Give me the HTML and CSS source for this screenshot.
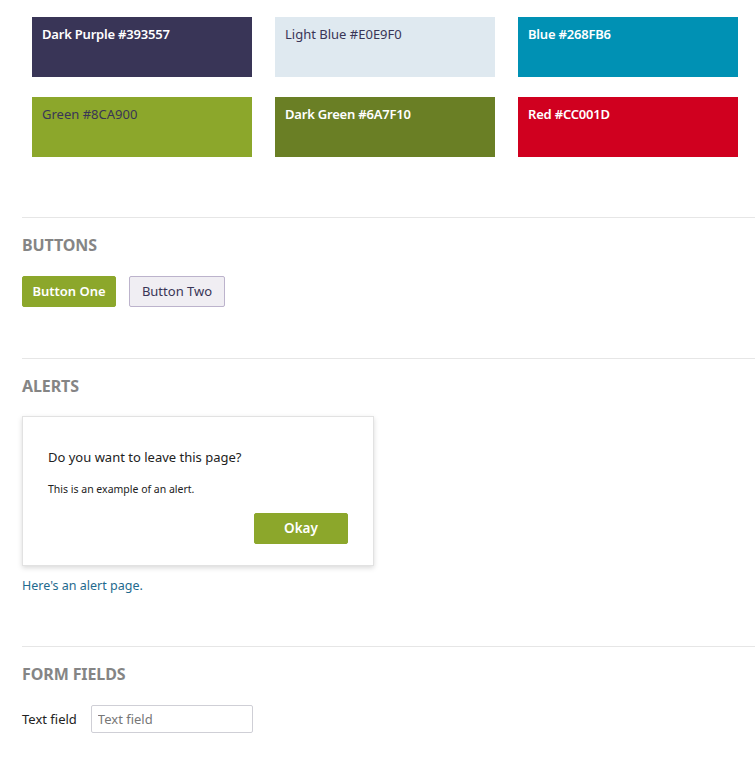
FILE: index.html
```html
<!DOCTYPE html>
<html>
<head>
<meta charset="utf-8">
<link rel="stylesheet" href="styles.css">
</head>
<body>
<div class="page">
  <div class="swatches">
    <div class="swatch purple">Dark Purple #393557</div>
    <div class="swatch lightblue">Light Blue #E0E9F0</div>
    <div class="swatch blue">Blue #268FB6</div>
    <div class="swatch green">Green #8CA900</div>
    <div class="swatch darkgreen">Dark Green #6A7F10</div>
    <div class="swatch red">Red #CC001D</div>
  </div>

  <section class="section">
    <h2 class="heading">BUTTONS</h2>
    <div class="buttons">
      <button class="btn btn-primary">Button One</button>
      <button class="btn btn-secondary">Button Two</button>
    </div>
  </section>

  <section class="section">
    <h2 class="heading">ALERTS</h2>
    <div class="alert">
      <p class="alert-title">Do you want to leave this page?</p>
      <p class="alert-text">This is an example of an alert.</p>
      <div class="alert-actions">
        <button class="btn btn-primary btn-okay">Okay</button>
      </div>
    </div>
    <a class="link" href="#">Here's an alert page.</a>
  </section>

  <section class="section last">
    <h2 class="heading">FORM FIELDS</h2>
    <div class="field">
      <label class="field-label">Text field</label>
      <input class="field-input" type="text" placeholder="Text field">
    </div>
  </section>
</div>
</body>
</html>
```

FILE: styles.css
```css
* { box-sizing: border-box; }
html, body { margin: 0; padding: 0; background: #fff; }
body {
  font-family: "Noto Sans", "Open Sans", sans-serif;
  color: #222;
}
.page {
  padding: 17px 0 0 22px;
}
.swatches {
  display: grid;
  grid-template-columns: 220px 220px 220px;
  grid-auto-rows: 60px;
  column-gap: 23px;
  row-gap: 20px;
  margin-left: 10px;
}
.swatch {
  height: 60px;
  padding: 8px 10px;
  font-size: 13px;
  line-height: 18px;
  font-weight: 600;
  letter-spacing: -0.2px;
  color: #fff;
}
.swatch.purple { background: #393557; }
.swatch.lightblue { background: #dfe9f0; color: #393557; font-weight: 400; letter-spacing: 0; }
.swatch.blue { background: #0091b4; }
.swatch.green { background: #8ca72b; color: #393557; font-weight: 400; letter-spacing: 0; }
.swatch.darkgreen { background: #6a7f25; }
.swatch.red { background: #d0001f; }

.section {
  margin-top: 60px;
  border-top: 1px solid #e6e6e6;
  padding-top: 17px;
}
.section + .section { margin-top: 51px; }
.section.last { margin-top: 50px; }
.heading {
  margin: 0 0 21px;
  font-size: 16px;
  line-height: 20px;
  font-weight: 700;
  color: #858585;
  letter-spacing: -0.1px;
}
.buttons {
  display: flex;
  gap: 13px;
}
.btn {
  font-family: inherit;
  height: 31px;
  padding: 0;
  font-size: 13px;
  line-height: 29px;
  white-space: nowrap;
  border-radius: 2px;
  cursor: pointer;
  text-align: center;
}
.btn-primary {
  background: #8ca72b;
  border: 1px solid #8ca72b;
  color: #fff;
  width: 94px;
  font-weight: 600;
}
.btn-secondary {
  background: #f0eef3;
  border: 1px solid #bcb3cc;
  color: #393557;
  width: 96px;
}
.alert {
  width: 352px;
  border: 1px solid #e2e2e2;
  box-shadow: 0 2px 5px rgba(0,0,0,0.15);
  padding: 30px 25px 21px 25px;
  background: #fff;
  margin-top: -1px;
  margin-bottom: 10px;
}
.alert-title {
  margin: 0 0 14px;
  font-size: 13px;
  line-height: 20px;
  color: #222;
}
.alert-text {
  margin: 0 0 16px;
  font-size: 10.5px;
  line-height: 16px;
  color: #222;
}
.alert-actions {
  display: flex;
  justify-content: flex-end;
}
.btn-okay {
  font-weight: 600;
  font-size: 13.5px;
}
.link {
  display: block;
  font-size: 12.5px;
  line-height: 20px;
  color: #1f6a8e;
  text-decoration: none;
}
.field {
  display: flex;
  align-items: center;
  gap: 14px;
}
.field-label {
  font-size: 13px;
  color: #222;
}
.field-input {
  width: 162px;
  height: 28px;
  border: 1px solid #cfcfd6;
  border-radius: 2px;
  padding: 0 6px;
  font-family: inherit;
  font-size: 13px;
  color: #222;
}
.field-input::placeholder { color: #777; }
```
